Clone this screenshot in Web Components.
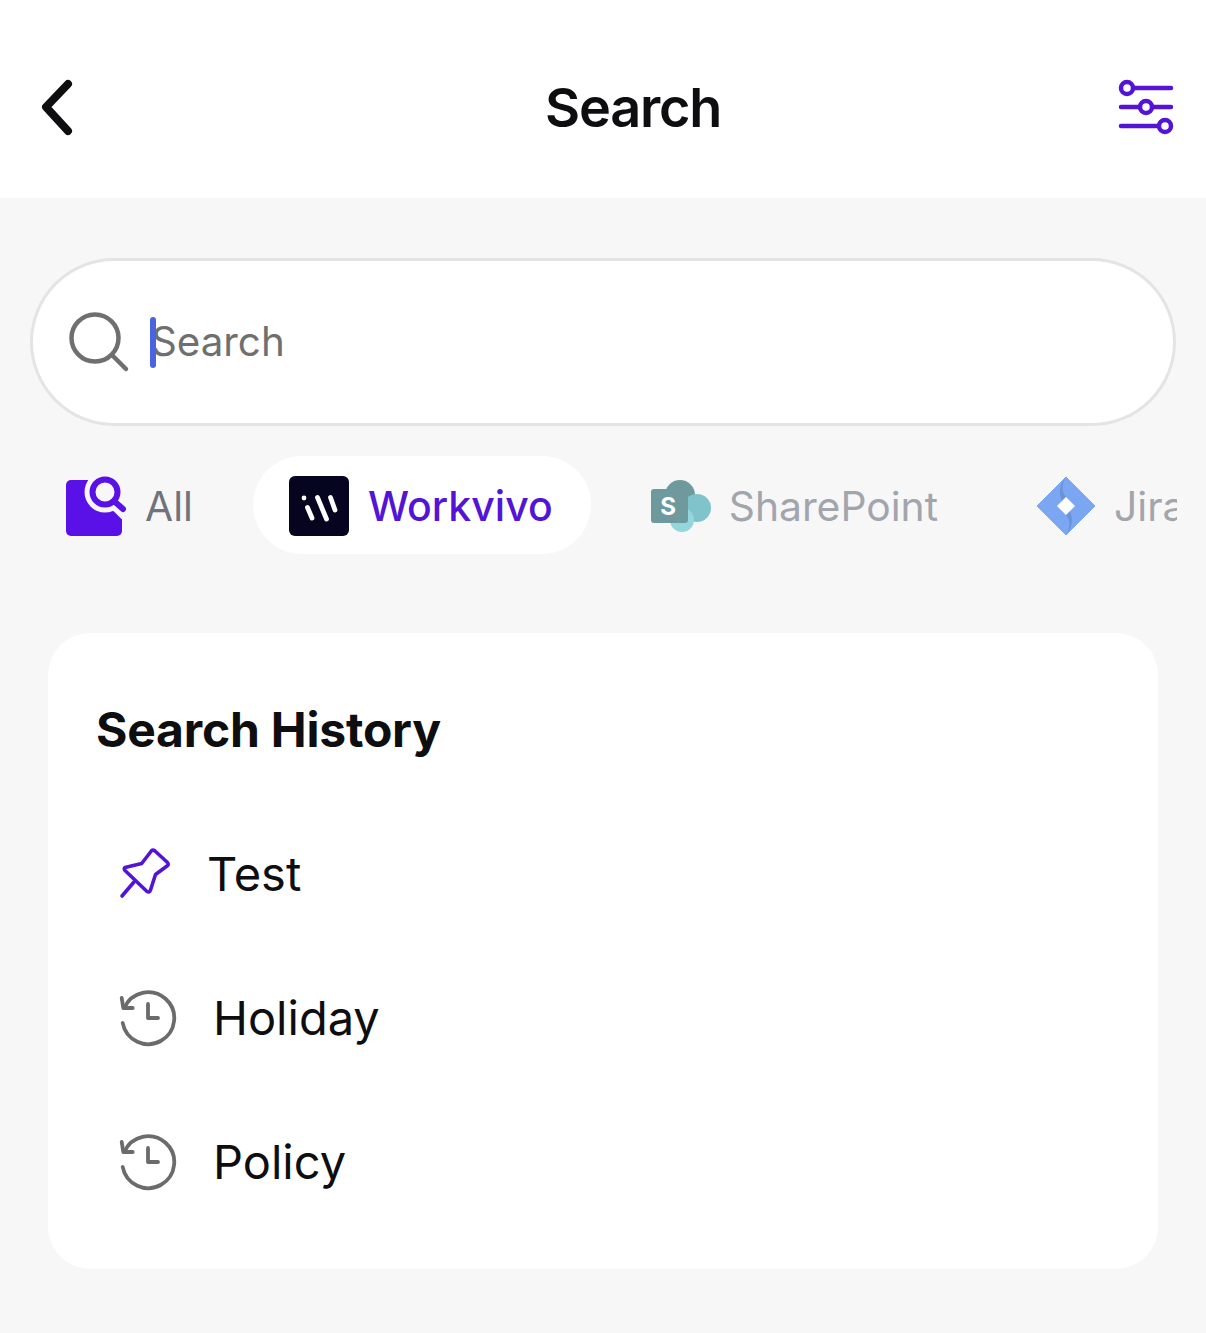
<!DOCTYPE html>
<html>
<head>
<meta charset="utf-8">
<title>Search</title>
<style>
  html, body { margin: 0; padding: 0; }
  body { background: #f7f7f7; font-family: Inter, "Noto Sans", sans-serif; color: #0e0e10; min-height: 1333px; overflow: hidden; }
</style>
</head>
<body>
<search-screen></search-screen>

<script>
const ICONS = {
  back: `<svg width="36" height="60" viewBox="40 77 36 60"><path d="M68 84 L46 107 L68 131" fill="none" stroke="#0e0e10" stroke-width="8" stroke-linecap="round" stroke-linejoin="round"/></svg>`,
  filter: `<svg width="56" height="56" viewBox="1118 79 56 56" fill="none" stroke="#5314d6" stroke-width="4.500" stroke-linecap="round"><path d="M1134 88H1171M1121 107H1139M1153 107H1171M1121 126H1158"/><circle cx="1127" cy="88" r="6"/><circle cx="1146" cy="107" r="6"/><circle cx="1165" cy="126" r="6"/></svg>`,
  lens: `<svg width="62" height="62" viewBox="68 311 62 62" fill="none" stroke="#6f6f6f" stroke-width="4.500" stroke-linecap="round"><circle cx="95" cy="338" r="23.500"/><path d="M112 355L126 369"/></svg>`,
  all: `<svg width="60" height="60" viewBox="66 476 60 60"><rect x="66" y="480" width="56" height="56" rx="5" fill="#5a11e8"/><rect x="88" y="474" width="40" height="28" fill="#f7f7f7"/><circle cx="105" cy="492" r="20.500" fill="#f7f7f7"/><path d="M108 495L127 514" stroke="#f7f7f7" stroke-width="15" fill="none"/><circle cx="105" cy="492" r="12.500" fill="none" stroke="#5a11e8" stroke-width="6"/><path d="M114 501L123 509" stroke="#5a11e8" stroke-width="6" stroke-linecap="round" fill="none"/></svg>`,
  workvivo: `<svg width="60" height="60" viewBox="289 476 60 60"><rect x="289" y="476" width="60" height="60" rx="6" fill="#05051f"/><g stroke="#fff" stroke-width="4.800" stroke-linecap="round" fill="none"><path d="M304 498V498.100M307.500 507.500L312 518M317.500 497.500L326.500 519M330.500 497.500L335 510"/></g></svg>`,
  sharepoint: `<svg width="60" height="60" viewBox="651 476 60 60"><circle cx="680" cy="495" r="15" fill="#6f9a9d"/><circle cx="697" cy="508" r="14" fill="#7fc4ca"/><circle cx="682" cy="520" r="12" fill="#95d5dc"/><rect x="651" y="489" width="37" height="34" rx="3" fill="#6f9a9d"/><text x="668" y="515" text-anchor="middle" font-family="Inter, sans-serif" font-size="24" font-weight="700" fill="#fff">S</text></svg>`,
  jira: `<svg width="60" height="60" viewBox="1037 476 60 60"><path d="M1066 477 L1095 506 L1066 535 L1037 506Z" fill="#7ba6f2" stroke="#7ba6f2" stroke-width="1" stroke-linejoin="round"/><path d="M1066 477 C1060 484 1058 492 1062 501 L1066 497 C1061 491 1062 483 1066 477Z" fill="#5f86cf" opacity=".6"/><path d="M1066 535 C1072 528 1074 520 1070 511 L1066 515 C1071 521 1070 529 1066 535Z" fill="#5f86cf" opacity=".6"/><path d="M1066 497 L1075 506 L1066 515 L1057 506Z" fill="#fff"/></svg>`,
  pin: `<svg width="56" height="56" viewBox="118 846 56 56" fill="none" stroke="#5314d6" stroke-width="3.600" stroke-linecap="round" stroke-linejoin="round"><path d="M125 867.500L141.700 863.500L151.700 850.500Q153 849.500 155 851L167.500 862.500Q169 864.500 167 866L155.500 874.500L150.500 890Q149.500 893 147 891.500L125 870.500Q123.500 868.500 125 867.500Z"/><path d="M134 882L122 896"/></svg>`,
  clock: `<svg width="60" height="60" viewBox="118 987 60 60" fill="none" stroke="#6b6b6b" stroke-width="3.800" stroke-linecap="round" stroke-linejoin="round"><path d="M122.700 1022A26 26 0 1 0 124.300 1007"/><path d="M121.700 997L123.300 1007L132.700 1007"/><path d="M148 1003V1017H158"/></svg>`
};

class SvgIcon extends HTMLElement {
  connectedCallback() {
    if (this.shadowRoot) return;
    this.attachShadow({ mode: 'open' }).innerHTML = `
      <style>:host { display: block; flex: none; line-height: 0; }</style>
      ${ICONS[this.getAttribute('name')]}
    `;
  }
}
customElements.define('svg-icon', SvgIcon);

class AppHeader extends HTMLElement {
  constructor() {
    super();
    this.attachShadow({ mode: 'open' }).innerHTML = `
      <style>
        :host { display: flex; align-items: center; height: 198px; box-sizing: border-box; padding: 16px 32px 0 40px; background: #fff; }
        h1 { margin: 0 0 0 469px; font-size: 54px; font-weight: 600; letter-spacing: -1.2px; color: #0e0e10; }
        .end { margin-left: auto; }
      </style>
      <svg-icon name="back"></svg-icon>
      <h1><slot></slot></h1>
      <svg-icon class="end" name="filter"></svg-icon>
    `;
  }
}
customElements.define('app-header', AppHeader);

class SearchField extends HTMLElement {
  constructor() {
    super();
    this.attachShadow({ mode: 'open' }).innerHTML = `
      <style>
        :host { display: flex; align-items: center; height: 168px; box-sizing: border-box; margin: 60px 30px 0; padding: 0 0 2px 35px; background: #fff; border: 3px solid #e4e4e4; border-radius: 84px; }
        .caret { flex: none; width: 6px; height: 51px; margin: 2px -5px 0 20px; border-radius: 3px; background: #4a63e0; position: relative; z-index: 1; }
        .hint { font-size: 40.300px; color: #6f6f6f; }
        svg-icon { margin-top: 2px; }
      </style>
      <svg-icon name="lens"></svg-icon>
      <span class="caret"></span>
      <span class="hint"><slot></slot></span>
    `;
  }
}
customElements.define('search-field', SearchField);

class SourceChip extends HTMLElement {
  connectedCallback() {
    if (this.shadowRoot) return;
    this.attachShadow({ mode: 'open' }).innerHTML = `
      <style>
        :host { display: flex; flex: none; align-items: center; gap: var(--chip-gap, 19px); height: 98px; box-sizing: border-box; padding: 2px var(--chip-end, 38px) 0 36px; border-radius: 49px; font-size: 40.800px; color: #a3a5ad; }
        :host([muted]) { color: #70737c; padding-right: 36px; }
        :host([active]) { background: #fff; color: #5314d6; font-weight: 500; font-size: 41px; }
      </style>
      <svg-icon name="${this.getAttribute('icon')}"></svg-icon>
      <slot></slot>
    `;
  }
}
customElements.define('source-chip', SourceChip);

class SourceTabs extends HTMLElement {
  constructor() {
    super();
    this.attachShadow({ mode: 'open' }).innerHTML = `
      <style>
        :host { display: flex; gap: 24px; width: 1147px; margin: 30px 0 0 30px; overflow: hidden; }
      </style>
      <slot></slot>
    `;
  }
}
customElements.define('source-tabs', SourceTabs);

class HistoryCard extends HTMLElement {
  connectedCallback() {
    if (this.shadowRoot) return;
    this.attachShadow({ mode: 'open' }).innerHTML = `
      <style>
        :host { display: block; box-sizing: border-box; height: 636px; margin: 79px 48px 0; padding: 69px 48px 0; background: #fff; border-radius: 42px; }
        h2 { margin: 0 0 46px; font-size: 48px; line-height: 56px; font-weight: 700; letter-spacing: -0.2px; color: #0e0e10; }
      </style>
      <h2>${this.getAttribute('heading')}</h2>
      <slot></slot>
    `;
  }
}
customElements.define('history-card', HistoryCard);

class HistoryRow extends HTMLElement {
  connectedCallback() {
    if (this.shadowRoot) return;
    const pinned = this.hasAttribute('pinned');
    this.attachShadow({ mode: 'open' }).innerHTML = `
      <style>
        :host { display: flex; align-items: center; height: 144px; padding-left: 22px; gap: ${pinned ? 33 : 35}px; font-size: 47px; color: #0e0e10; }
        .label { margin-top: -6px; }
        svg-icon { margin-top: -5px; }
      </style>
      <svg-icon name="${pinned ? 'pin' : 'clock'}"></svg-icon>
      <span class="label"><slot></slot></span>
    `;
  }
}
customElements.define('history-row', HistoryRow);

class SearchScreen extends HTMLElement {
  constructor() {
    super();
    this.attachShadow({ mode: 'open' }).innerHTML = `
      <style>:host { display: block; }</style>
      <app-header>Search</app-header>
      <search-field>Search</search-field>
      <source-tabs>
        <source-chip icon="all" muted>All</source-chip>
        <source-chip icon="workvivo" active>Workvivo</source-chip>
        <source-chip icon="sharepoint" style="--chip-gap: 18px; --chip-end: 39px">SharePoint</source-chip>
        <source-chip icon="jira" style="--chip-gap: 17px">Jira</source-chip>
      </source-tabs>
      <history-card heading="Search History">
        <history-row pinned>Test</history-row>
        <history-row>Holiday</history-row>
        <history-row>Policy</history-row>
      </history-card>
    `;
  }
}
customElements.define('search-screen', SearchScreen);
</script>
</body>
</html>
